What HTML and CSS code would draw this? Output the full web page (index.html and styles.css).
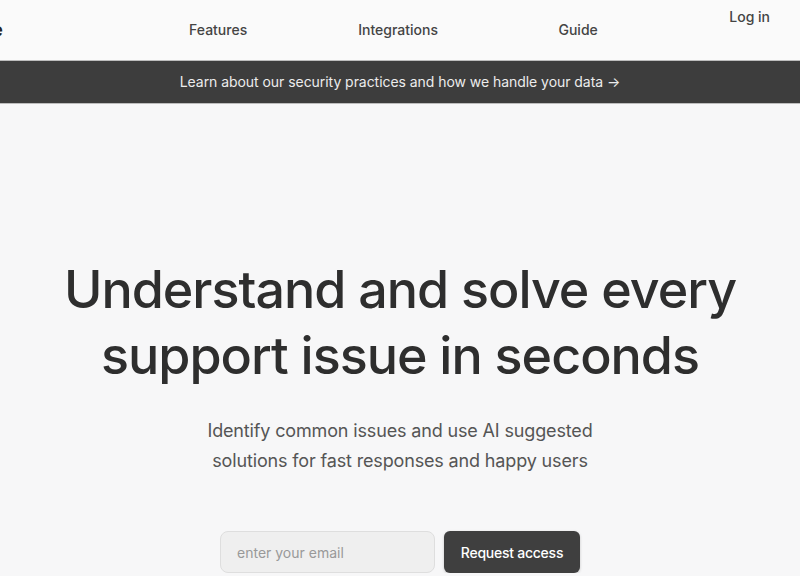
FILE: index.html
```html
<!DOCTYPE html>
<html lang="en">
<head>
  <meta charset="UTF-8">
  <meta name="viewport" content="width=device-width, initial-scale=1.0">
  <title>Support insights</title>
  <link rel="stylesheet" href="styles.css">
</head>
<body>

<header class="site-header">
  <div class="brand">Resolve</div>
  <nav class="main-nav">
    <a href="#">Features</a>
    <a href="#">Integrations</a>
    <a href="#">Guide</a>
  </nav>
  <a href="#" class="login">Log in</a>
</header>

<a href="#" class="banner">Learn about our security practices and how we handle your data &rarr;</a>

<main class="hero">
  <h1>Understand and solve every<br>support issue in seconds</h1>
  <p class="lead">Identify common issues and use AI suggested<br>solutions for fast responses and happy users</p>
  <form class="signup" onsubmit="return false">
    <input type="email" placeholder="enter your email">
    <button type="submit">Request access</button>
  </form>
</main>

</body>
</html>
```

FILE: styles.css
```css
/* Basic reset */
*, *::before, *::after {
  box-sizing: border-box;
}

body, html {
  margin: 0;
  padding: 0;
  font-family: Inter, 'Noto Sans', sans-serif;
  background: #f7f7f8;
  color: #2f2f2f;
  overflow: hidden;
}

a {
  text-decoration: none;
  color: inherit;
}

/* Header */
.site-header {
  height: 60px;
  background: #fafafa;
  display: flex;
  align-items: flex-start;
  font-size: 14px;
  font-weight: 500;
  color: #444;
}

.brand {
  width: 80px;
  margin-left: -77px;
  text-align: right;
  font-size: 18px;
  font-weight: 600;
  color: #222;
  padding-top: 19px;
}

.main-nav {
  flex: 1;
  display: flex;
  justify-content: center;
  padding-top: 21px;
  padding-left: 64px;
}

.main-nav a {
  width: 180px;
  text-align: center;
}

.login {
  padding-top: 8px;
  padding-right: 30px;
  font-size: 14px;
}

/* Announcement bar */
.banner {
  display: block;
  height: 44px;
  line-height: 42px;
  background: #3d3d3d;
  color: #ececec;
  text-align: center;
  font-size: 14px;
  letter-spacing: -0.05px;
  border-top: 1px solid #bdbdbd;
  border-bottom: 1px solid #bdbdbd;
}

/* Hero */
.hero {
  text-align: center;
  padding-top: 153px;
}

.hero h1 {
  margin: 0;
  font-size: 52px;
  line-height: 66px;
  font-weight: 500;
  letter-spacing: -1px;
  color: #2e2e2e;
}

.lead {
  margin: 27px 0 0;
  font-size: 18px;
  line-height: 30px;
  letter-spacing: -0.15px;
  color: #555;
}

.signup {
  margin-top: 55px;
  display: flex;
  justify-content: center;
  gap: 9px;
}

.signup input {
  width: 215px;
  height: 42px;
  padding: 0 16px;
  border: 1px solid #dedede;
  border-radius: 8px;
  background: #efefef;
  font-family: inherit;
  font-size: 14px;
  color: #333;
}

.signup input::placeholder {
  color: #999;
}

.signup button {
  width: 136px;
  height: 42px;
  border: none;
  border-radius: 6px;
  background: #3f3f3f;
  color: #fff;
  font-family: inherit;
  font-size: 14px;
  font-weight: 500;
  letter-spacing: -0.25px;
  box-shadow: 0 1px 3px rgba(0, 0, 0, 0.2);
}
```
